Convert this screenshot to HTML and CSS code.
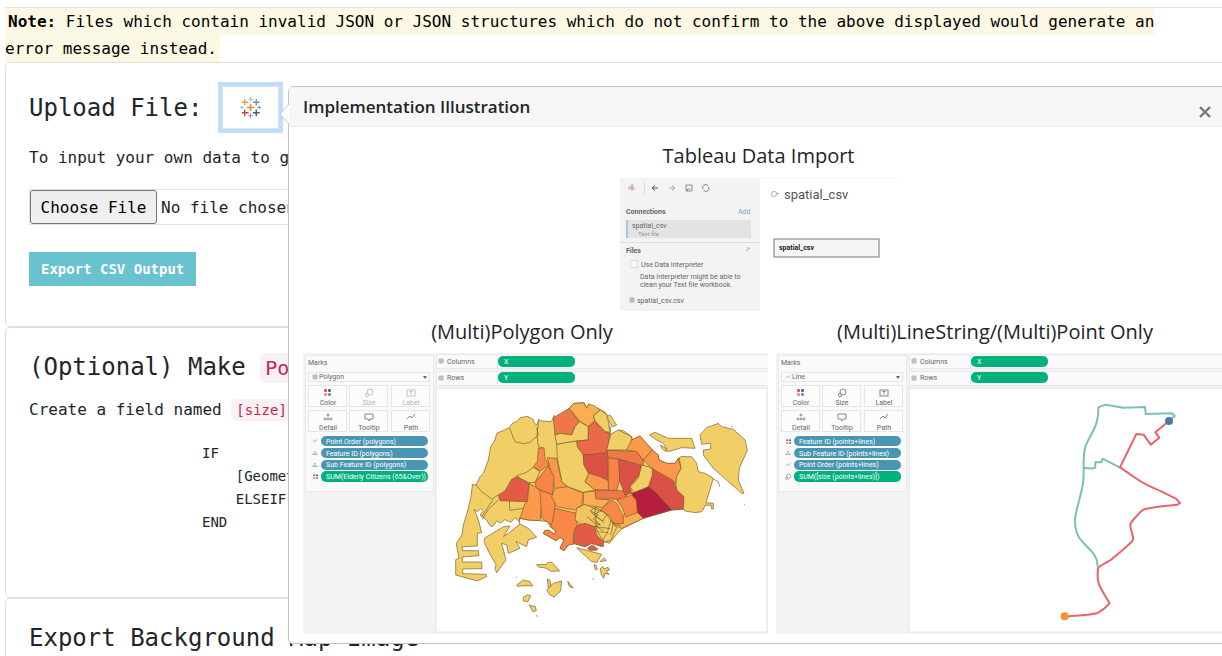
FILE: index.html
```html
<!DOCTYPE html>
<html lang="en">
<head>
<meta charset="utf-8">
<title>Spatial CSV Export</title>
<link rel="stylesheet" href="styles.css">
</head>
<body>
<svg class="defs" aria-hidden="true">
  <defs>
    <g id="i-color"><rect x="-4" y="-4" width="3" height="3" rx="1" fill="#d9546a"/><rect y="-4" width="3" height="3" rx="1" fill="#4a6ba5"/><rect x="-4" width="3" height="3" rx="1" fill="#f0907a"/><rect width="3" height="3" rx="1" fill="#9a7ab8"/></g>
    <g id="i-size" class="line"><circle cx="1" cy="-1" r="3"/><circle cx="-2" cy="2" r="1.6"/></g>
    <g id="i-label" class="line"><rect x="-4" y="-3" width="8" height="6"/><path d="M-1.500-1.500h3M0-1.500v3"/></g>
    <g id="i-detail" class="line"><circle cy="-2" r="1"/><circle cx="-3" cy="2" r="1"/><circle cy="2" r="1"/><circle cx="3" cy="2" r="1"/></g>
    <g id="i-tip" class="line"><path d="M-4-3h8v5h-3l-1 2-1-2h-3z"/></g>
    <g id="i-path" class="line"><path d="M-4 2l3-3 2 2 3-4"/></g>
    <g id="i-grid" class="line thin"><path d="M-2-2h4v4h-4zM-2 0h4M0-2v4"/></g>
    <g id="shelves">
      <rect x="303" y="353" width="465" height="281" fill="#f3f3f3"/>
      <g fill="#fafafa" stroke="#e9e9e9"><rect x="305.500" y="355.500" width="128" height="136"/><rect x="436.500" y="354.500" width="332" height="14"/><rect x="436.500" y="371.500" width="332" height="14"/></g>
      <path d="M497.500 355v13M497.500 372v13" stroke="#e9e9e9"/>
      <rect x="436" y="388" width="331" height="244" fill="#fff" stroke="#e4e4e4"/>
      <g fill="#fcfcfc" stroke="#e6e6e6"><rect x="308.500" y="372.500" width="121" height="9"/><rect x="308.500" y="385.500" width="38" height="21"/><rect x="349.500" y="385.500" width="38" height="21"/><rect x="391.500" y="385.500" width="38" height="21"/><rect x="308.500" y="410.500" width="38" height="21"/><rect x="349.500" y="410.500" width="38" height="21"/><rect x="391.500" y="410.500" width="38" height="21"/></g>
      <path d="M423 376h4l-2 3z" fill="#666"/>
      <rect x="498" y="356" width="77" height="11" rx="5" fill="#00b180"/><rect x="498" y="372" width="77" height="11" rx="5" fill="#00b180"/>
      <text x="308" y="365" class="lab">Marks</text>
      <use href="#i-grid" x="441" y="361"/><text x="447" y="364" class="lab">Columns</text>
      <use href="#i-grid" x="441" y="378"/><text x="447" y="380" class="lab">Rows</text>
      <text x="504" y="364" class="pill-text">X</text><text x="504" y="380" class="pill-text">Y</text>
      <use href="#i-color" x="328" y="393"/><text x="328" y="405" class="lab mid">Color</text>
      <use href="#i-detail" x="328" y="417"/><text x="328" y="430" class="lab mid">Detail</text>
      <use href="#i-tip" x="369" y="417"/><text x="369" y="430" class="lab mid">Tooltip</text>
      <use href="#i-path" x="411" y="417"/><text x="411" y="430" class="lab mid">Path</text>
      <g fill="#4996b2"><rect x="321" y="436" width="107" height="10" rx="5"/><rect x="321" y="448" width="107" height="10" rx="5"/><rect x="321" y="460" width="107" height="10" rx="5"/></g>
      <rect x="321" y="471" width="107" height="11" rx="5" fill="#00b180"/>
    </g>
  </defs>
</svg>
<main class="page">
  <p class="notice"><mark><strong>Note:</strong> Files which contain invalid JSON or JSON structures which do not confirm to the above displayed would generate an<br>error message instead.</mark></p>

  <section class="card upload">
    <div class="title-row">
      <h2>Upload File:</h2>
      <button class="logo-btn" type="button" aria-label="Implementation illustration">
        <svg width="23" height="23" viewBox="0 0 24 24" fill="none">
          <path d="M12 8v8M8 12h8" stroke="#ed8b3b" stroke-width="1.700"/>
          <path d="M6 3v7M3 6.500h7" stroke="#efa04a" stroke-width="1.400"/>
          <path d="M18 3v7M14.500 6.500h7" stroke="#6a97ab" stroke-width="1.400"/>
          <path d="M6 14v7M3 17.500h7" stroke="#cf3a51" stroke-width="1.400"/>
          <path d="M18 14v7M14.500 17.500h7" stroke="#355f87" stroke-width="1.400"/>
          <path d="M12 1v5M9.500 3.500h5M3 10v4M1 12h4" stroke="#9ebdcc"/>
          <path d="M21 10v4M19 12h4M12 18v5M9.500 20.500h5" stroke="#8d91ba"/>
        </svg>
      </button>
    </div>
    <p><label for="file">To input your own data to generate the CSV output, upload a file.</label></p>
    <input class="file" id="file" type="file">
    <button class="export" type="button">Export CSV Output</button>
  </section>

  <section class="card optional">
    <h2>(Optional) Make <code>Point</code></h2>
    <p>Create a field named <code>[size]</code></p>
<pre class="formula">IF
    [Geometry]
    ELSEIF
END</pre>
  </section>

  <section class="card">
    <h2>Export Background Map Image</h2>
  </section>
</main>

<aside class="popover" role="dialog" aria-labelledby="pop-title">
  <svg class="arrow" width="10" height="20" viewBox="0 0 10 20"><path d="M10 0L1 10l9 10" fill="#fff" stroke="#c4c7ca"/></svg>
  <header class="pop-head">
    <h3 id="pop-title">Implementation Illustration</h3>
    <button class="close" type="button" aria-label="Close"><svg width="14" height="14" viewBox="0 0 14 14"><path d="M2 2l10 10M12 2L2 12" stroke="#777" stroke-width="2.400"/></svg></button>
  </header>
  <div class="pop-body">
    <h4>Tableau Data Import</h4>
    <div class="import">
      <svg class="shot" viewBox="618 178 278 133" role="img" aria-label="Tableau data import">
        <path d="M618 178h278" stroke="#eee"/>
        <rect x="618" y="178" width="140" height="133" fill="#f3f3f3"/>
        <path d="M630 184v7M626 188h7" stroke="#d38b80"/><path d="M627 185l5 5M632 185l-5 5" stroke="#a8b4c8" stroke-width=".7"/>
        <path d="M642.500 182v13" stroke="#ddd"/>
        <path d="M656 188h-5M653 185.500l-3 2.500 3 2.500" fill="none" stroke="#555"/>
        <path d="M667 188h5M670 185.500l3 2.500-3 2.500" fill="none" stroke="#aaa"/>
        <path d="M684 185h6v6h-6zM685.500 191v-2h3" fill="none" stroke="#777" stroke-width=".8"/>
        <path d="M701 189a2.700 2.700 0 0 1 5-3M706.500 187a2.700 2.700 0 0 1-5 3" fill="none" stroke="#777" stroke-width=".9"/>
        <text x="624" y="214" class="lab bold">Connections</text><text x="736" y="214" class="lab add">Add</text>
        <rect x="624" y="220" width="125" height="18" fill="#e3e3e3"/><rect x="624" y="220" width="2" height="18" fill="#a3c9dc"/>
        <text x="630" y="228" class="lab">spatial_csv</text><text x="636" y="236" class="lab tiny">Text file</text>
        <path d="M618 242.500h140" stroke="#ddd"/>
        <text x="624" y="253" class="lab bold">Files</text><path d="M744 251l4-3m-3 0h2" stroke="#999" stroke-width=".7"/>
        <rect x="628.500" y="260.500" width="7" height="7" fill="#f9f9f9" stroke="#ddd"/>
        <text x="639" y="267" class="lab">Use Data Interpreter</text>
        <text x="638" y="279" class="lab">Data Interpreter might be able to</text><text x="638" y="287" class="lab">clean your Text file workbook.</text>
        <use href="#i-grid" x="630" y="300"/><text x="635" y="303" class="lab">spatial_csv.csv</text>
        <rect x="769.500" y="191.500" width="5" height="5" rx="2" fill="none" stroke="#999" stroke-width=".8"/><path d="M775 193.500h2" stroke="#999"/>
        <text x="782" y="199" class="sheet">spatial_csv</text>
        <rect x="772" y="239" width="105" height="18" fill="#f5f5f5" stroke="#777"/><text x="777" y="250" class="lab bold dark">spatial_csv</text>
      </svg>
    </div>
    <div class="pair">
      <figure>
        <figcaption>(Multi)Polygon Only</figcaption>
        <svg class="shot" viewBox="303 353 465 281" role="img" aria-label="Polygon map of elderly citizens">
          <use href="#shelves"/>
          <use href="#i-grid" x="315" y="377"/><text x="319" y="379" class="lab">Polygon</text>
          <g opacity=".5"><use href="#i-size" x="369" y="393"/><use href="#i-label" x="411" y="393"/><text x="369" y="405" class="lab mid">Size</text><text x="411" y="405" class="lab mid">Label</text></g>
          <use href="#i-path" transform="translate(315 441) scale(.6)"/><use href="#i-detail" transform="translate(315 453) scale(.6)"/><use href="#i-detail" transform="translate(315 465) scale(.6)"/><use href="#i-color" transform="translate(316 477) scale(.7)"/>
          <g class="pill-text"><text x="326" y="444">Point Order (polygons)</text><text x="326" y="456">Feature ID (polygons)</text><text x="326" y="467">Sub Feature ID (polygons)</text><text x="326" y="479">SUM(Elderly Citizens (65&amp;Over))</text></g>
          <g class="map" transform="translate(440 385) scale(.33333)">
            <path d="M208 128L218 114 230 110 240 98 262 94 280 104 284 116 291 119 296 104 306 108 330 110 337 106 342 91 345 100 388 70 400 56 410 54 432 53 436 60 440 70 446 57 455 67 462 62 460 75 470 68 482 75 494 80 503 92 502 110 512 130 510 145 518 150 535 135 550 137 575 155 578 165 588 158 600 153 606 160 637 195 655 210 657 225 680 235 705 235 715 220 725 214 740 215 755 215 770 235 775 260 795 265 820 280 805 330 798 353 820 355 820 372 815 372 813 361 795 361 790 373 785 380 765 383 735 378 732 372 695 375 610 400 545 432 530 448 508 475 492 470 485 485 455 475 435 485 400 475 385 480 372 497 360 490 372 465 360 457 348 467 310 445 315 436 328 436 342 448 348 438 330 425 322 410 300 407 265 405 240 400 238 410 225 398 213 412 195 404 183 414 170 408 158 425 150 422 140 405 120 390 130 378 122 371 112 380 102 374 110 390 118 415 125 443 112 445 112 483 66 485 68 497 115 497 117 512 66 516 68 531 125 531 126 551 68 552 68 566 138 568 141 574 112 588 47 570 47 524 57 520 51 488 49 475 66 450 70 420 83 378 92 340 97 303 96 298 108 300 120 275 130 265 145 225 152 185 165 165 170 145 190 136z"/>
            <path fill="none" d="M208 128L225 170 250 176 270 172 295 150 290 128M296 104L291 150 295 185 310 190M108 300L125 320 155 342 175 330M125 395l35-52M175 345l-30 28-18 30M208 348l2 28 42-6 10-20M718 220l5 30-15 25 0 25 3 15"/>
            <path fill="#ef764a" d="M340 98L388 70 418 110 405 125 395 150 360 145 345 150z"/>
            <path fill="#f9ae52" d="M388 70L400 56 432 53 440 70 446 57 462 62 470 68 482 75 460 92 465 108 445 125 418 108z"/>
            <path d="M345 150l15-5 35 5 10-25 13-15 27 15v40l-35 3-60 10zM460 92l22-17 20 17 8 50-15-2-30-32z"/>
            <path fill="#ea6a47" d="M445 125l20-17 30 32 15 5-8 50v12l-72 3-18-25-2-17 35-3z"/>
            <path d="M350 178l60-10 2 17 18 25 2 30 16 22-13 28 30 25-35 7-48-17-17-15-13-72zM230 272l30-10 20-15 20 13-15 32-20 1-25-13z"/>
            <path fill="#dc5145" d="M430 210l72-7 3 82-25-10-35-10-13-25z"/>
            <path fill="#fa874a" d="M295 190l17-2 3 32 13 20-28 18-20-13 12-15z"/>
            <path fill="#fb974c" d="M322 218l28 2 15 70 17 15-12 11-25-6-13-55z"/>
            <path fill="#f98246" d="M285 292l40-49 17 32-4 57-38-17-12-7z"/>
            <path fill="#e35b44" d="M175 330l20-12 20-35 15-8 38 20-3 17-3 38-82-3z"/>
            <path fill="#fc9a4c" d="M268 295l32 20 8 15-8 77-35-2-25-5 15-45 7-5z"/>
            <path fill="#fb8d4a" d="M300 315l45 17v58l-10 32-13-12-17-10z"/>
            <path fill="#fca04e" d="M345 310l37-5 48 20-5 35-20 15-55-10-15-30z"/>
            <path fill="#fa8748" d="M345 370l67 15-4 12 4 23-12 25v33l-15 2-13 17-12-7 12-25-12-8-12 10-38-22 5-9h13l14 12 6-10-16-12 6-20z"/>
            <path fill="#f9ae52" d="M430 322l37-4 1 22 40 5-18 23-60-8z"/>
            <path fill="#fc9a4c" d="M435 290l13-25 32 10 25 12 3 28h-43z"/>
            <path fill="#ef764a" d="M465 315l95 3v25l-92-1z"/>
            <path fill="#f98246" d="M505 218l30 4 5 58-10 37-25-2z"/>
            <path fill="#dc5145" d="M537 222l68 20-5 25-30 38 5 20-20 5-16-42z"/>
            <path fill="#f07848" d="M500 195l90 5 20 25v17l-75-20-30-4z"/>
            <path d="M500 195l13-48 22-12 40 20-2 20-13 20z"/>
            <path fill="#fc9a4c" d="M560 195l15-30 25-12 37 42-27 30-20-25z"/>
            <path fill="#fc964c" d="M610 225l27-30 18 15 2 15 23 10h25l10-15 8 30-13 25-4 20-35-15-36-30z"/>
            <path fill="#dc5145" d="M635 250l65 37 10 28 22 20-2 37-35 3-45-50-23-20 10-35z"/>
            <path d="M605 240l20 5 12 7v18l-12 35-40 20-15-20 25-25z"/>
            <path fill="#b51f3d" d="M575 325l52-20 23 20 45 50-85 25-18-10z"/>
            <path fill="#f9ae52" d="M550 390l40-10 20 20-65 30-25-12z"/>
            <path fill="#fa874a" d="M530 345l45-15 14 15 3 38-35 13-10-28zM480 375l35-30 15 10 20 40v20l-35 2-30-22z"/>
            <path fill="#f2c45f" d="M410 370l25-12 40 17-4 15 14 15-5 22-50-4-25-18z"/>
            <path d="M468 385l18-8 26 20 6 20 12 10-18 40-20 3-20-30-4-20z"/>
            <path fill="none" d="M450 378l18-12 32 22-12 20-18-12zM455 380l20 10-15 12 20 16-15 4 25 15M468 366l-5 22 30 26M442 395l20 18 20 6M500 388l12 20-10 35-15 25M512 408l30 15M520 415l-8 35M470 425l40 6M475 440l30 3"/>
            <path fill="#e35b44" d="M405 430l10-10 20-5 30 10 5 25 20 20v15l-35-10-20 10-35-10zM442 490l15-10 17 12-5 4-20 0z"/>
            <path d="M133 460l57-35 20-2-20 32 15-10 35-28 25 13 25 27-25 8-5 20-32-15 12 20-35 15-5-25-15-5 13 50-28 38-5-13 3-12-18-30-17-35zM410 488l75 20-15 25-18-5zM480 530l12-12 7 9zM462 540l6 0 4 12-6 2zM290 539l30-1 5-7 12 2 22 25-25 1-18-10-20-3zM230 600l20-15 20 5 8 13-20-1-25 2zM322 582l8 3 3 18-8 5zM320 615l20-20 25-7-3 30-20 18-14-8zM383 589l17 20-12-4zM250 637l12-8 10 3-8 18-14-2zM268 660l18 5 3 12-11 3zM480 552l8-8 4 8 12-5 5 8-10 2 8 12-12-4-4 15-6-10zM628 150l17-8 40 18 70 0 10 30-40-2-40 12-15-25-20-10zM661 180l16 10 3 10-12-7zM780 150l20-22 35-13 10 10 35 8 35 32 7 30-24 55-3 35 17 40h-7l-85-75-30-40v-15l22-3 0-17-27 3zM500 95l10-5 20 30-13 6z"/>
            <path fill="none" d="M820 282l15 8 4 15M238 397v22M228 576l3 2M290 690l2 6M457 580l5 4M873 123l4 2M912 357l3 2"/>
          </g>
        </svg>
      </figure>
      <figure>
        <figcaption>(Multi)LineString/(Multi)Point Only</figcaption>
        <svg class="shot" viewBox="303 353 465 281" role="img" aria-label="Line map">
          <use href="#shelves"/>
          <use href="#i-path" transform="translate(315 377) scale(.6)"/><text x="319" y="379" class="lab">Line</text>
          <use href="#i-size" x="369" y="393"/><use href="#i-label" x="411" y="393"/><text x="369" y="405" class="lab mid">Size</text><text x="411" y="405" class="lab mid">Label</text>
          <use href="#i-color" transform="translate(316 442) scale(.7)"/><use href="#i-detail" transform="translate(315 453) scale(.6)"/><use href="#i-path" transform="translate(315 465) scale(.6)"/><use href="#i-size" transform="translate(315 477) scale(.7)"/>
          <g class="pill-text"><text x="326" y="444">Feature ID (points+lines)</text><text x="326" y="456">Sub Feature ID (points+lines)</text><text x="326" y="467">Point Order (points+lines)</text><text x="326" y="479">SUM([size (points+lines)])</text></g>
          <g transform="translate(527 380) scale(.33333)" fill="none" stroke-width="6" stroke-linejoin="round">
            <path stroke="#7cbfb9" d="M510 120l14-12-8-8-79 2-2-21-65 2-53-9-22 8c0 60-18 68-38 115-10 30-4 65-7 105-5 45-25 90-25 120 0 30 7 48 22 63 20 24 47 38 46 75M250 263c20 3 36 4 36-3v-13h18l4-11 52 27"/>
            <path stroke="#e8636a" d="M507 123l-41 34 12 16-26 21-21-30-22-2-49 100c35 23 60 45 90 57 30 12 50 24 78 37l12 13-8 5c-30 2-60 6-98 13-8 3-30 25-42 43-5 15 10 35 7 50-9 14-50 45-67 60-15 10-31 14-38 25-1 20-3 32 2 45 7 20 22 40 33 60-10 11-23 22-38 30-30 7-60 5-96 10"/>
            <circle cx="507" cy="123" r="12" fill="#4a78ad"/><circle cx="194" cy="709" r="12" fill="#f29130"/>
          </g>
        </svg>
      </figure>
    </div>
  </div>
</aside>
</body>
</html>
```
FILE: styles.css
```css
* { box-sizing: border-box; }
body {
  margin: 0;
  position: relative;
  min-height: 100vh;
  overflow: hidden;
  background: #fff;
  color: #212529;
  font: 16px/27px "DejaVu Sans Mono", "Liberation Mono", monospace;
}
h2, h3, h4, p, pre, figure { margin: 0; font-weight: 400; }
button { font-family: inherit; cursor: pointer; }
.defs { position: absolute; width: 0; height: 0; }
.page { margin: 7px -20px 0 5px; height: calc(100vh - 7px); overflow: hidden; }
.notice { border-top: 1px solid #dee2e6; white-space: nowrap; color: #000; }
mark { padding: 4px 3px; background: #fcf8e3; color: inherit; }
.card { padding: 19px 23px 40px; border: 1px solid #dcdee0; border-radius: 5px; background: #fff; white-space: nowrap; position: relative; }
h2 { font-size: 24px; line-height: 40px; }
.title-row { display: flex; align-items: center; gap: 17px; margin-bottom: 11px; }
.logo-btn {
  display: flex; align-items: center; justify-content: center;
  width: 57px; height: 43px; margin: 4px 3px;
  padding: 0; border: 1px solid #dee2e6; background: #fff;
  box-shadow: 0 0 0 4px #bfdeff;
}
.file {
  display: block; width: 100%; height: 36px; margin-top: 18px;
  border: 1px solid #dee2e6; font: inherit; line-height: 34px; color: #212529;
}
.file::file-selector-button {
  height: 34px; width: 127px; padding: 0; margin: 0 4px 0 0;
  border: 1px solid #767676; border-radius: 3px;
  background: #efefef; color: #000; font: inherit;
}
.export {
  display: block; height: 34px; margin-top: 27px; padding: 0 12px;
  border: 0; background: #68c2d0; color: #fff;
  font-size: 14px; font-weight: 700;
}
code { padding: 3px 5px; border-radius: 5px; background: #f9f2f4; color: #c7254e; font: inherit; font-size: 14px; }
h2 code { font-size: 20px; }
.optional { padding-bottom: 63px; }
.optional p { margin-top: 8px; }
.formula { padding: 18px 0 0 173px; font: inherit; font-size: 14px; line-height: 23px; }

.popover {
  position: absolute; top: 86px; left: 288px; right: -34px;
  border: 1px solid #c4c7ca; border-radius: 5px; background: #fff;
  font-family: "Open Sans", "Noto Sans", sans-serif;
}
.arrow { position: absolute; left: -10px; top: 17px; }
.pop-head {
  display: flex; justify-content: space-between; align-items: center;
  height: 40px; padding: 0 41px 0 14px;
  border-bottom: 1px solid #ebebeb; border-radius: 4px 4px 0 0; background: #f7f7f7;
}
h3 { font-size: 17px; line-height: 24px; font-weight: 600; }
.close { display: flex; padding: 10px 2px 0; border: 0; background: none; }
.pop-body { padding: 14px 14px 9px; }
h4, figcaption { font-size: 20px; line-height: 29px; text-align: center; padding-right: 27px; font-weight: 400; }
.import { display: flex; justify-content: center; padding: 8px 27px 6px 0; }
.import .shot { width: 278px; }
.pair { display: grid; grid-template-columns: 1fr 1fr; gap: 8px; }
figcaption { margin-bottom: 7px; }
.shot { display: block; width: 100%; }
.line { fill: none; stroke: #888; stroke-width: 1px; }
.thin { opacity: .6; }
.lab { font: 7px Roboto, sans-serif; fill: #666; }
.tiny { font-size: 6px; fill: #999; }
.bold { font-weight: 700; }
.dark { fill: #222; }
.add { fill: #62a9cb; }
.sheet { font: 13px Roboto, sans-serif; fill: #555; }
.mid { text-anchor: middle; }
.pill-text { font: 7px Roboto, sans-serif; fill: #fff; }
.map { fill: #f2ce66; stroke: #775d2a; stroke-width: 2px; stroke-linejoin: round; }
```
